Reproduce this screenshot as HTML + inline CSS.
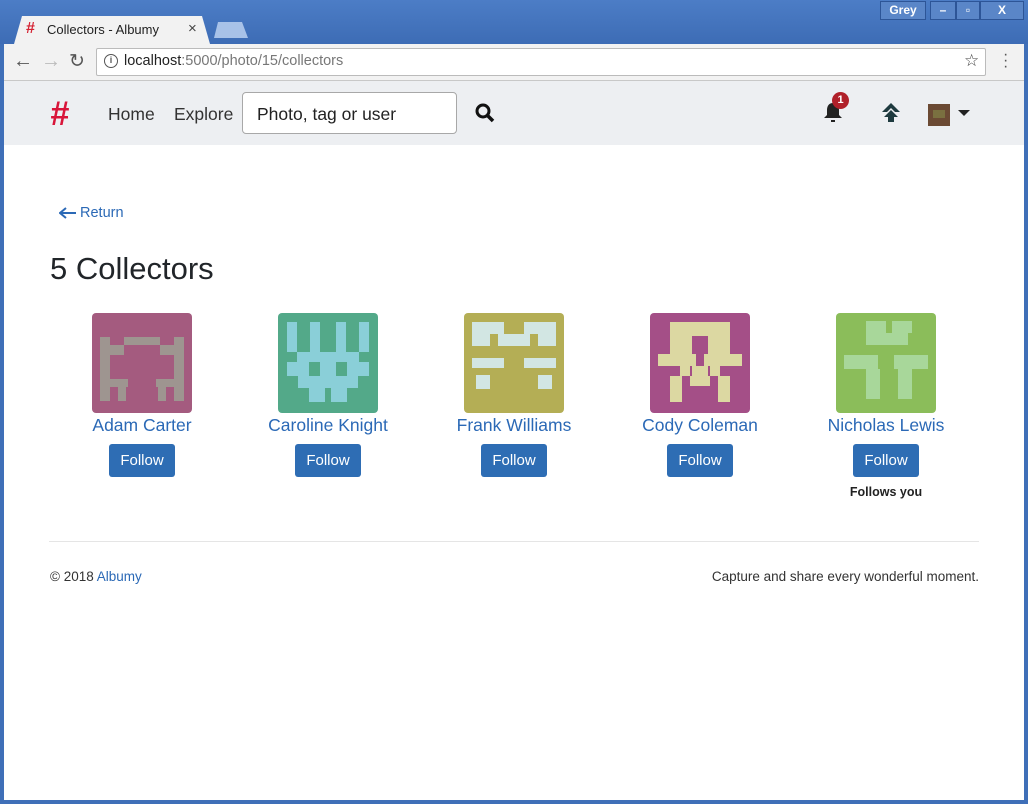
<!DOCTYPE html>
<html><head><meta charset="utf-8"><style>
*{margin:0;padding:0;box-sizing:border-box}
body{width:1028px;height:804px;overflow:hidden;font-family:"Liberation Sans",sans-serif;background:#3f6fb8;position:relative}
.abs{position:absolute}
#title{left:0;top:0;width:1028px;height:44px;background:linear-gradient(#4c7dc6,#3d6cb5)}
#tab{left:14px;top:16px;width:196px;height:28px;background:#f2f2f2;clip-path:polygon(8px 0,188px 0,196px 28px,0 28px)}
#tab2{left:214px;top:22px;width:34px;height:16px;background:#a8c2e8;clip-path:polygon(4px 0,28px 0,34px 16px,0 16px)}
#toolbar{left:4px;top:44px;width:1020px;height:37px;background:#f2f2f2;border-bottom:1px solid #c8c8c8}
#url{left:96px;top:48px;width:890px;height:28px;background:#fff;border:1px solid #bbb;border-radius:2px}
#nav{left:4px;top:81px;width:1020px;height:64px;background:#edeff2}
#page{left:4px;top:145px;width:1020px;height:655px;background:#fff}
.wbtn{top:1px;height:19px;border:1px solid #2d5597;background:#5a86c8;color:#fff;font-size:12px;text-align:center;line-height:17px;font-weight:bold}
.card{position:absolute;top:313px;width:180px;text-align:center}
.card svg{display:block;margin:0 auto;border-radius:4px}
.name{color:#2b69b6;font-size:17.5px;margin-top:1px;height:22px;line-height:22px}
.btn{display:inline-block;margin-top:8px;width:66px;height:33px;background:#2e6db4;color:#fff;border-radius:3px;font-size:15px;line-height:34px}
.fy{font-size:12.5px;font-weight:bold;color:#222;margin-top:8px}
</style></head><body>
<div id="title" class="abs"></div>
<div class="abs wbtn" style="left:880px;width:46px">Grey</div>
<div class="abs wbtn" style="left:930px;width:26px">–</div>
<div class="abs wbtn" style="left:956px;width:24px">▫</div>
<div class="abs wbtn" style="left:980px;width:44px">X</div>
<div id="tab" class="abs"></div>
<div id="tab2" class="abs"></div>
<div class="abs" style="left:26px;top:20px;color:#d52333;font-size:16px;font-weight:bold">#</div>
<div class="abs" style="left:47px;top:22px;font-size:13px;color:#222">Collectors - Albumy</div>
<div class="abs" style="left:188px;top:20px;font-size:15px;color:#444">×</div>
<div id="toolbar" class="abs"></div>
<div class="abs" style="left:13px;top:50px;font-size:20px;color:#555">←</div>
<div class="abs" style="left:41px;top:50px;font-size:20px;color:#bbb">→</div>
<div class="abs" style="left:69px;top:50px;font-size:19px;color:#555">↻</div>
<div id="url" class="abs"></div>
<div class="abs" style="left:104px;top:54px;width:14px;height:14px;border:1.5px solid #555;border-radius:50%;font-size:9px;text-align:center;line-height:11px;color:#555;font-weight:bold">i</div>
<div class="abs" style="left:124px;top:53px;font-size:14.5px;color:#222">localhost<span style="color:#777">:5000/photo/15/collectors</span></div>
<div class="abs" style="left:964px;top:51px;font-size:17px;color:#444">☆</div>
<div class="abs" style="left:1003px;top:52px;font-size:16px;color:#555;line-height:6px">·<br>·<br>·</div>
<div id="nav" class="abs"></div>
<div class="abs" style="left:50px;top:94px;color:#d8153a;font-size:34px;font-weight:bold;font-style:italic;line-height:40px">#</div>
<div class="abs" style="left:108px;top:104px;font-size:17.5px;color:#333">Home</div>
<div class="abs" style="left:174px;top:104px;font-size:17.5px;color:#333">Explore</div>
<div class="abs" style="left:242px;top:92px;width:215px;height:42px;background:#fff;border:1px solid #a8a8a8;border-radius:4px;font-size:17.5px;color:#222;padding:11px 0 0 14px">Photo, tag or user</div>
<svg class="abs" style="left:475px;top:103px" width="20" height="20"><circle cx="8" cy="8" r="6" fill="none" stroke="#111" stroke-width="3"/><line x1="12" y1="12" x2="18" y2="18" stroke="#111" stroke-width="3.5"/></svg>
<svg class="abs" style="left:822px;top:100px" width="22" height="24"><path d="M11 3c-4 0-6 3-6 7v5l-3 3h18l-3-3v-5c0-4-2-7-6-7z" fill="#222"/><rect x="9" y="20" width="4" height="2" fill="#222"/></svg>
<div class="abs" style="left:832px;top:92px;width:17px;height:17px;border-radius:50%;background:#b0202a;color:#fff;font-size:11px;font-weight:bold;text-align:center;line-height:17px">1</div>
<svg class="abs" style="left:879px;top:101px" width="24" height="22"><path d="M12 2l-9 9h5l4-4 4 4h5z" fill="#1e3a3f"/><path d="M12 9l-7 7h4v5h6v-5h4z" fill="#1e3a3f"/></svg>
<div class="abs" style="left:928px;top:104px;width:22px;height:22px;background:#6b4a34"><div style="margin:6px 5px;width:12px;height:8px;background:#7a7040"></div></div>
<div class="abs" style="left:958px;top:110px;width:0;height:0;border-left:6px solid transparent;border-right:6px solid transparent;border-top:6px solid #222"></div>
<div id="page" class="abs"></div>
<svg class="abs" style="left:59px;top:207px" width="18" height="12"><path d="M1 6h16M7 1L1 6l6 5" fill="none" stroke="#2b69b6" stroke-width="2"/></svg>
<div class="abs" style="left:80px;top:205px;font-size:14.5px;color:#2b69b6">Return</div>
<div class="abs" style="left:50px;top:251px;font-size:31px;color:#212529">5 Collectors</div>

<div class="card" style="left:52px"><svg width="100" height="100"><rect width="100" height="100" fill="#a45b7f"/><g fill="#9e9590"><rect x="8" y="24" width="10" height="64"/><rect x="82" y="24" width="10" height="64"/><rect x="18" y="32" width="14" height="10"/><rect x="68" y="32" width="14" height="10"/><rect x="32" y="24" width="36" height="8"/><rect x="18" y="66" width="18" height="8"/><rect x="64" y="66" width="18" height="8"/><rect x="26" y="74" width="8" height="14"/><rect x="66" y="74" width="8" height="14"/></g></svg><div class="name">Adam Carter</div><div class="btn">Follow</div></div>
<div class="card" style="left:238px"><svg width="100" height="100"><rect width="100" height="100" fill="#53a989"/><g fill="#8acfd8"><rect x="9" y="9" width="10" height="30"/><rect x="32" y="9" width="10" height="30"/><rect x="58" y="9" width="10" height="30"/><rect x="81" y="9" width="10" height="30"/><rect x="19" y="39" width="62" height="10"/><rect x="9" y="49" width="22" height="14"/><rect x="69" y="49" width="22" height="14"/><rect x="42" y="49" width="16" height="14"/><rect x="20" y="63" width="60" height="12"/><rect x="31" y="75" width="16" height="14"/><rect x="53" y="75" width="16" height="14"/></g></svg><div class="name">Caroline Knight</div><div class="btn">Follow</div></div>
<div class="card" style="left:424px"><svg width="100" height="100"><rect width="100" height="100" fill="#b4ae55"/><g fill="#d2e6e3"><rect x="8" y="9" width="32" height="12"/><rect x="60" y="9" width="32" height="12"/><rect x="8" y="21" width="18" height="12"/><rect x="74" y="21" width="18" height="12"/><rect x="34" y="21" width="32" height="12"/><rect x="8" y="45" width="32" height="10"/><rect x="60" y="45" width="32" height="10"/><rect x="12" y="62" width="14" height="14"/><rect x="74" y="62" width="14" height="14"/></g></svg><div class="name">Frank Williams</div><div class="btn">Follow</div></div>
<div class="card" style="left:610px"><svg width="100" height="100"><rect width="100" height="100" fill="#a44f87"/><g fill="#dcd8a2"><rect x="20" y="9" width="60" height="14"/><rect x="20" y="23" width="22" height="18"/><rect x="58" y="23" width="22" height="18"/><rect x="8" y="41" width="38" height="12"/><rect x="54" y="41" width="38" height="12"/><rect x="30" y="53" width="10" height="10"/><rect x="60" y="53" width="10" height="10"/><rect x="42" y="53" width="16" height="10"/><rect x="20" y="63" width="12" height="26"/><rect x="68" y="63" width="12" height="26"/><rect x="40" y="63" width="20" height="10"/></g></svg><div class="name">Cody Coleman</div><div class="btn">Follow</div></div>
<div class="card" style="left:796px"><svg width="100" height="100"><rect width="100" height="100" fill="#8bbd5a"/><g fill="#a8d79a"><rect x="30" y="8" width="20" height="12"/><rect x="56" y="8" width="20" height="12"/><rect x="30" y="20" width="42" height="12"/><rect x="8" y="42" width="34" height="14"/><rect x="58" y="42" width="34" height="14"/><rect x="30" y="56" width="14" height="30"/><rect x="62" y="56" width="14" height="30"/></g></svg><div class="name">Nicholas Lewis</div><div class="btn">Follow</div><div class="fy">Follows you</div></div>

<div class="abs" style="left:49px;top:541px;width:930px;height:1px;background:#e5e5e5"></div>
<div class="abs" style="left:50px;top:569px;font-size:13.5px;color:#333">© 2018 <span style="color:#2b69b6">Albumy</span></div>
<div class="abs" style="right:49px;top:569px;font-size:13.5px;color:#333">Capture and share every wonderful moment.</div>
</body></html>
